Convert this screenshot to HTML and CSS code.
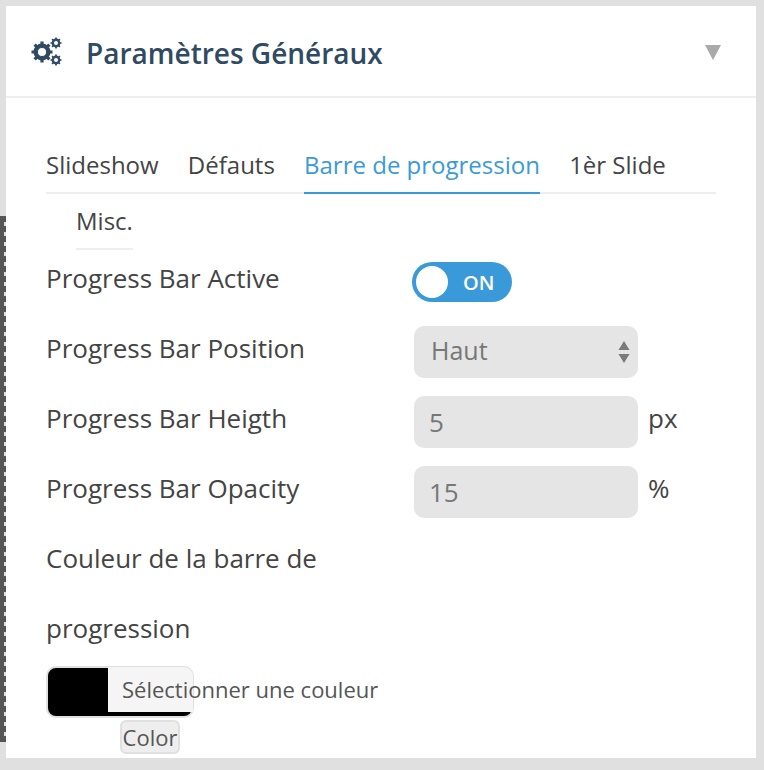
FILE: index.html
```html
<!DOCTYPE html>
<html lang="fr">
<head>
<meta charset="utf-8">
<title>Paramètres Généraux</title>
<link rel="stylesheet" href="styles.css">
</head>
<body>
<div class="dashes"></div>
<main class="card">
  <header class="head">
    <svg class="gears" viewBox="0 0 32 30" width="32" height="30" aria-hidden="true">
      <g fill="none" stroke="#2f4a63">
        <circle cx="11" cy="15" r="6.500" stroke-width="4"/>
        <path d="M11 4.500v21M.5 15h21M3.600 7.600l14.800 14.800M18.400 7.600L3.600 22.400" stroke-width="3.200"/>
        <circle cx="25" cy="6" r="3.400" stroke-width="2"/>
        <path d="M25 .5v11M19.500 6h11M21.100 2.100l7.800 7.800M28.900 2.100l-7.800 7.800" stroke-width="1.700"/>
        <circle cx="25" cy="23" r="3.400" stroke-width="2"/>
        <path d="M25 17.500v11M19.500 23h11M21.100 19.100l7.800 7.800M28.900 19.100l-7.800 7.800" stroke-width="1.700"/>
      </g>
      <circle cx="11" cy="15" r="4" fill="#fff"/>
      <circle cx="25" cy="6" r="2" fill="#fff"/>
      <circle cx="25" cy="23" r="2" fill="#fff"/>
    </svg>
    <h1 class="title">Paramètres Généraux</h1>
    <span class="caret"></span>
  </header>
  <div class="body">
    <nav class="tabs">
      <a class="tab">Slideshow</a>
      <a class="tab">Défauts</a>
      <a class="tab active">Barre de progression</a>
      <a class="tab">1èr Slide</a>
      <a class="tab misc">Misc.</a>
    </nav>
    <div class="row">
      <label class="lbl">Progress Bar Active</label>
      <div class="toggle"><span class="knob"></span><span class="on">ON</span></div>
    </div>
    <div class="row">
      <label class="lbl">Progress Bar Position</label>
      <div class="field select">Haut
        <svg class="updown" viewBox="0 0 12 22" width="12" height="22" aria-hidden="true"><path d="M6 0l5.500 9H.5zM6 22L.5 13h11z" fill="#7a7a7a"/></svg>
      </div>
    </div>
    <div class="row">
      <label class="lbl">Progress Bar Heigth</label>
      <div class="field">5</div><span class="unit">px</span>
    </div>
    <div class="row">
      <label class="lbl">Progress Bar Opacity</label>
      <div class="field">15</div><span class="unit">%</span>
    </div>
    <p class="long">Couleur de la barre de progression</p>
    <div class="picker">
      <div class="swatch"><span class="select-color">Sélectionner une couleur</span></div>
      <span class="color">Color</span>
    </div>
  </div>
</main>
</body>
</html>
```
FILE: styles.css
```css
* { box-sizing: border-box; }
html, body { margin: 0; height: 770px; overflow: hidden; }
body {
  background: #e0e0e0;
  padding: 6px 8px 12px 6px;
  font-family: "Open Sans", sans-serif;
  color: #444;
  position: relative;
}
.dashes {
  position: absolute;
  left: 0;
  top: 216px;
  width: 6px;
  height: 526px;
  background:
    linear-gradient(#555, #555) 0 0 / 4px 100% no-repeat,
    repeating-linear-gradient(to bottom, #555 0 6px, #e0e0e0 6px 10px);
}
.card { background: #fff; height: 752px; overflow: hidden; }
.head {
  height: 92px;
  border-bottom: 2px solid #eee;
  display: flex;
  align-items: center;
  padding: 0 35px 0 25px;
}
.gears { margin-top: 2px; flex: none; }
.title {
  margin: 3px 0 0 23px;
  font-size: 28px;
  font-weight: 600;
  color: #2f4a63;
  flex: 1;
}
.caret {
  width: 0; height: 0;
  margin-top: 3px;
  border-left: 8px solid transparent;
  border-right: 8px solid transparent;
  border-top: 15px solid #aaa;
}
.body { padding: 50px 40px 0; }
.tabs {
  display: flex;
  flex-wrap: wrap;
  width: 670px;
  background: linear-gradient(#eee, #eee) 0 44px / 670px 2px no-repeat;
}
.tab {
  height: 46px;
  font-size: 24px;
  line-height: 34px;
  margin-right: 29.200px;
  border-bottom: 2px solid transparent;
  white-space: nowrap;
}
.tab.active { color: #3a9ad9; border-bottom-color: #3a9ad9; }
.tab.misc {
  margin: 8px 0 0 30px;
  height: 48px;
  line-height: 37px;
  border-bottom-color: #eee;
}
.row {
  display: flex;
  align-items: flex-start;
  height: 70px;
}
.lbl { width: 368px; font-size: 26px; line-height: 56px; flex: none; }
.toggle {
  width: 100px; height: 40px;
  margin: 12px 0 0 -2px;
  border-radius: 20px;
  background: #3a9ad9;
  display: flex;
  align-items: center;
  padding-left: 4px;
  color: #fff;
}
.knob { width: 32px; height: 32px; border-radius: 50%; background: #fff; flex: none; }
.on { font-size: 20px; font-weight: 600; margin-left: 15px; }
.field {
  width: 224px; height: 52px;
  background: #e5e5e5;
  border-radius: 10px;
  color: #777;
  font-size: 26px;
  line-height: 52px;
  padding-left: 15px;
  margin-top: 6px;
  position: relative;
}
.select { padding-left: 17px; font-size: 25px; font-weight: 500; line-height: 48px; }
.updown { position: absolute; right: 8px; top: 15px; }
.unit { font-size: 26px; margin-left: 10px; line-height: 52px; margin-top: 2px; }
.long { margin: -7px 0 0; width: 300px; font-size: 26px; line-height: 70px; }
.picker { position: relative; margin-top: 3px; }
.swatch {
  width: 148px; height: 52px;
  border: 2px solid #e0e0e0;
  border-radius: 10px;
  background: #000;
  position: relative;
}
.swatch::after {
  content: "";
  position: absolute;
  left: 60px; top: -1px; right: -1px; bottom: 4px;
  background: #f5f5f5;
  border-radius: 0 9px 0 0;
}
.select-color {
  position: absolute;
  left: 74px; top: 5px;
  z-index: 1;
  font-size: 22px;
  line-height: 32px;
  white-space: nowrap;
  color: #555;
}
.color {
  position: absolute;
  left: 74px; top: 54px;
  width: 60px; height: 34px;
  border: 2px solid #e0e0e0;
  border-radius: 6px;
  background: #eee;
  font-size: 22px;
  line-height: 30px;
  text-align: center;
  color: #555;
}
```
